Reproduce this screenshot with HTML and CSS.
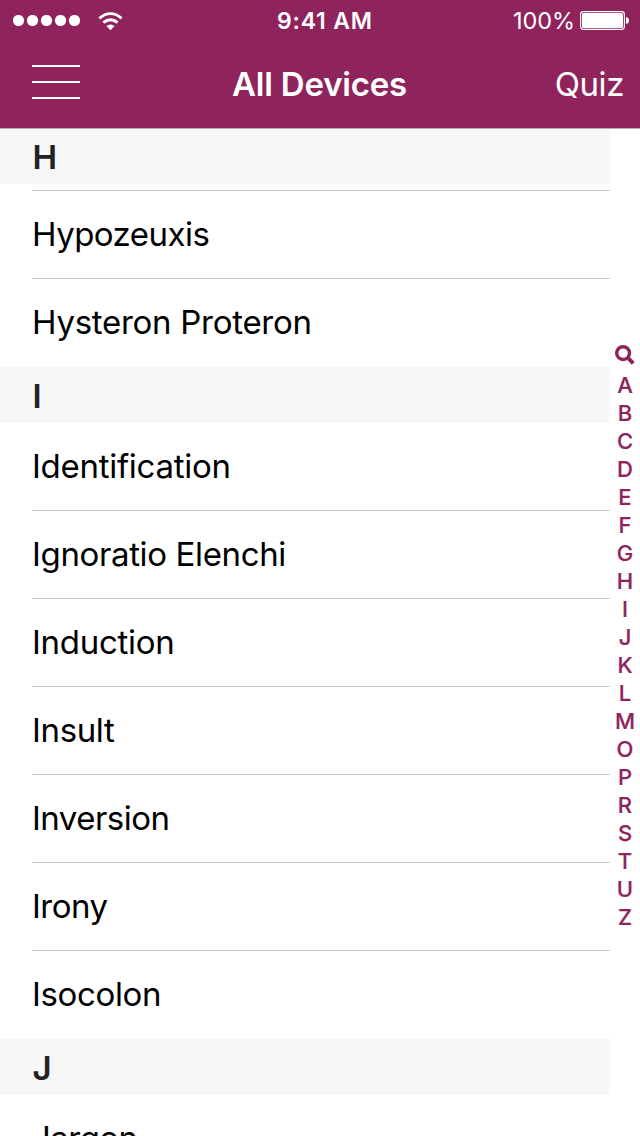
FILE: index.html
```html
<!DOCTYPE html>
<html lang="en">
<head>
<meta charset="utf-8">
<title>All Devices</title>
<link rel="stylesheet" href="styles.css">
</head>
<body>
<div class="screen">
  <header class="top">
    <div class="status">
      <div class="signal">
        <svg class="dots" width="68" height="12" viewBox="0 0 68 12" fill="#fff"><circle cx="5.5" cy="5.5" r="5.6"/><circle cx="19.5" cy="5.5" r="5.6"/><circle cx="33.5" cy="5.5" r="5.6"/><circle cx="47.5" cy="5.5" r="5.6"/><circle cx="61.5" cy="5.5" r="5.6"/></svg>
        <svg class="wifi" width="26" height="19" viewBox="0 0 26 19"><g fill="none" stroke="#fff" stroke-width="2.9"><path d="M1.4 6.4Q6.6 1.6 12.5 1.6T23.6 6.4"/><path d="M5.4 10.6Q8.6 7.7 12.5 7.7T19.6 10.6"/></g><path fill="#fff" d="M12.5 18.2L8.4 14.1Q12.5 10.7 16.6 14.1Z"/></svg>
      </div>
      <span class="time">9:41 AM</span>
      <div class="power">
        <span class="percent">100%</span>
        <svg width="50" height="20" viewBox="0 0 50 20"><rect x=".6" y=".6" width="43.8" height="17.8" rx="2.8" fill="none" stroke="#fff" stroke-width="1.1"/><rect x="2" y="2" width="41" height="15" rx="1.6" fill="#fff"/><path fill="#fff" d="M46 6q3 .5 3 3.5T46 13z"/></svg>
      </div>
    </div>
    <nav class="nav">
      <svg class="menu" width="48" height="34" viewBox="0 0 48 34" fill="#fff"><path d="M0 0h48v2H0zM0 16h48v2H0zM0 32h48v2H0z"/></svg>
      <h1 class="title">All Devices</h1>
      <span class="quiz">Quiz</span>
    </nav>
  </header>
  <main class="content">
    <div class="list">
      <h2 class="section">H</h2>
      <ul class="rows rows-scrolled">
        <li class="row tight"><span>Hypozeuxis</span></li>
        <li class="row"><span>Hysteron Proteron</span></li>
      </ul>
      <h2 class="section">I</h2>
      <ul class="rows">
        <li class="row"><span>Identification</span></li>
        <li class="row snug"><span>Ignoratio Elenchi</span></li>
        <li class="row"><span>Induction</span></li>
        <li class="row snug"><span>Insult</span></li>
        <li class="row tight"><span>Inversion</span></li>
        <li class="row tight"><span>Irony</span></li>
        <li class="row snug"><span>Isocolon</span></li>
      </ul>
      <h2 class="section">J</h2>
      <ul class="rows">
        <li class="row tight"><span>Jargon</span></li>
      </ul>
    </div>
    <aside class="index">
      <svg class="search" width="20" height="20" viewBox="0 0 20 20" fill="none" stroke="#8f245c"><circle cx="8.1" cy="8.1" r="6.4" stroke-width="3.4"/><path d="M12.6 12.6L18.3 18.3" stroke-width="4"/></svg>
      <span>A</span><span>B</span><span>C</span><span>D</span><span>E</span><span>F</span><span>G</span><span>H</span><span>I</span><span>J</span><span>K</span><span>L</span><span>M</span><span>O</span><span>P</span><span>R</span><span>S</span><span>T</span><span>U</span><span>Z</span>
    </aside>
  </main>
</div>
</body>
</html>
```
FILE: styles.css
```css
* { box-sizing: border-box; }
body { margin: 0; background: #fff; font-family: Inter, "Liberation Sans", sans-serif; }
.screen { width: 640px; height: 1136px; overflow: hidden; display: flex; flex-direction: column; }
svg { display: block; flex: none; }
.top { flex: none; height: 128px; background: #8f245c; color: #fff; }
.status { height: 40px; display: grid; grid-template-columns: 264px 96px 1fr; align-items: center; padding: 0 10px 0 13px; }
.signal { display: flex; align-items: center; gap: 17px; padding-top: 1px; }
.time { font-size: 23px; font-weight: 600; line-height: 40px; letter-spacing: 0.8px; padding-top: 1px; white-space: nowrap; }
.power { display: flex; justify-content: flex-end; align-items: center; gap: 5px; padding-top: 1px; }
.percent { font-size: 23.5px; line-height: 40px; letter-spacing: -0.1px; }
.nav { height: 88px; display: grid; grid-template-columns: 200px 1fr auto; align-items: center; padding: 0 17px 0 32px; }
.title { margin: 0; font-size: 33px; font-weight: 600; line-height: 88px; letter-spacing: -0.2px; }
.menu { margin-top: -4px; }
.quiz { font-size: 33px; line-height: 88px; letter-spacing: -0.4px; margin-right: -1px; }
.content { flex: 1; min-height: 0; display: grid; grid-template-columns: 610px 30px; border-top: 1px solid #b5adb1; }
.list { min-width: 0; }
.section { margin: 0; height: 56px; padding: 1px 0 0 32.5px; background: #f7f7f7; color: #222; font-size: 33px; font-weight: 600; line-height: 56px; }
.section:first-child { height: 55px; padding-top: 0; }
.rows { list-style: none; margin: 0; padding: 0 0 0 32px; }
.rows-scrolled { padding-top: 6px; }
.rows-scrolled .row:first-child { height: 89px; border-top: 1px solid #c8c7cc; }
.row { height: 88px; border-bottom: 1px solid #c8c7cc; font-size: 33px; line-height: 87px; letter-spacing: -0.28px; color: #000; white-space: nowrap; }
.row.snug { letter-spacing: -0.36px; }
.row.tight { letter-spacing: -0.53px; }
.row:last-child { border-bottom-color: transparent; }
.index { display: flex; flex-direction: column; align-items: center; padding-top: 216px; color: #8f245c; font-size: 22px; font-weight: 500; line-height: 28px; -webkit-text-stroke: 0.2px #8f245c; }
.search { margin-bottom: 6px; }
```
